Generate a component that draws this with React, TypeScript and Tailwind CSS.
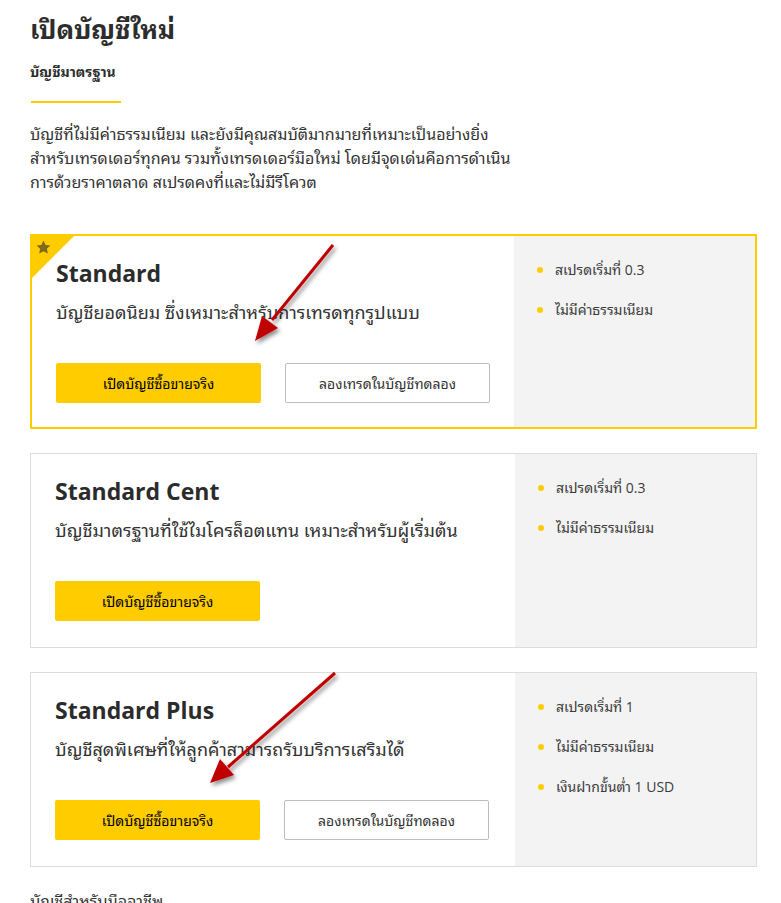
const FONT =
  "font-['Open_Sans','Noto_Sans_Thai_Looped','Loma','Garuda','Tlwg_Typo','Noto_Sans_Thai',sans-serif]";

type Plan = {
  name: string;
  desc: string;
  features: string[];
  demo: boolean;
  featured?: boolean;
};

const PLANS: Plan[] = [
  {
    name: 'Standard',
    desc: 'บัญชียอดนิยม ซึ่งเหมาะสำหรับการเทรดทุกรูปแบบ',
    features: ['สเปรดเริ่มที่ 0.3', 'ไม่มีค่าธรรมเนียม'],
    demo: true,
    featured: true,
  },
  {
    name: 'Standard Cent',
    desc: 'บัญชีมาตรฐานที่ใช้ไมโครล็อตแทน เหมาะสำหรับผู้เริ่มต้น',
    features: ['สเปรดเริ่มที่ 0.3', 'ไม่มีค่าธรรมเนียม'],
    demo: false,
  },
  {
    name: 'Standard Plus',
    desc: 'บัญชีสุดพิเศษที่ให้ลูกค้าสามารถรับบริการเสริมได้',
    features: ['สเปรดเริ่มที่ 1', 'ไม่มีค่าธรรมเนียม', 'เงินฝากขั้นต่ำ 1 USD'],
    demo: true,
  },
];

function Corner() {
  return (
    <div className="absolute left-0 top-0 h-[42px] w-[42px]">
      <svg width="42" height="42" viewBox="0 0 42 42">
        <polygon points="0,0 42,0 0,42" fill="#ffcc00" />
        <path
          d="M11.5 4.5l2.1 4.4 4.8.6-3.5 3.3.9 4.8-4.3-2.3-4.3 2.3.9-4.8-3.5-3.3 4.8-.6z"
          fill="#7d6a1c"
        />
      </svg>
    </div>
  );
}

function PlanCard({ plan }: { plan: Plan }) {
  return (
    <div
      className={
        plan.featured
          ? 'relative flex h-[195px] border-2 border-[#ffcc00] bg-white'
          : 'relative flex h-[195px] border border-[#dcdcdc] bg-white'
      }
    >
      {plan.featured && <Corner />}
      <div className="flex-1 pl-[24px] pt-[22px]">
        <h3 className="text-[23px] font-bold leading-[30px] text-[#2b2b2b]">{plan.name}</h3>
        <p className="mt-[10px] text-[18px] leading-[28px] text-[#333]">{plan.desc}</p>
        <div className="mt-[37px] flex gap-[24px]">
          <button className="h-[40px] w-[205px] rounded-[2px] bg-[#ffcc00] text-[14px] text-black">
            เปิดบัญชีซื้อขายจริง
          </button>
          {plan.demo && (
            <button className="h-[40px] w-[205px] rounded-[2px] border border-[#bdbdbd] bg-white text-[14px] text-[#333]">
              ลองเทรดในบัญชีทดลอง
            </button>
          )}
        </div>
      </div>
      <ul className="flex w-[241px] flex-col gap-[20px] bg-[#f3f3f3] pl-[23px] pt-[24px]">
        {plan.features.map((f) => (
          <li key={f} className="flex items-center gap-[12px] text-[14px] leading-[20px] text-[#3c3c3c]">
            <span className="h-[6px] w-[6px] rounded-full bg-[#ffcc00]" />
            {f}
          </li>
        ))}
      </ul>
    </div>
  );
}

function Arrows() {
  return (
    <svg className="pointer-events-none absolute left-0 top-0" width="781" height="903">
      <defs>
        <filter id="sh" x="-20%" y="-20%" width="140%" height="140%">
          <feDropShadow dx="2" dy="3" stdDeviation="2" floodColor="#000" floodOpacity="0.45" />
        </filter>
      </defs>
      <g filter="url(#sh)">
        <line x1="333" y1="245" x2="272" y2="320" stroke="#c00000" strokeWidth="3" />
        <polygon points="255,341 262,316 278,328" fill="#c00000" />
        <line x1="335" y1="673" x2="228" y2="767" stroke="#c00000" strokeWidth="3" />
        <polygon points="210,783 220,759 234,775" fill="#c00000" />
      </g>
    </svg>
  );
}

export default function App() {
  return (
    <div className={`relative h-[903px] w-[781px] overflow-hidden bg-white ${FONT}`}>
      <div className="ml-[30px] w-[727px]">
        <h1 className="pt-[13px] text-[26px] font-bold leading-[32px] text-[#2d2d2d]">เปิดบัญชีใหม่</h1>
        <h2 className="mt-[17px] text-[14px] font-bold leading-[20px] text-[#2d2d2d]">บัญชีมาตรฐาน</h2>
        <div className="ml-px mt-[19px] h-[2px] w-[90px] bg-[#ffcc00]" />
        <p className="mt-[19px] w-[520px] text-[16px] leading-[24px] text-[#333]">
          บัญชีที่ไม่มีค่าธรรมเนียม และยังมีคุณสมบัติมากมายที่เหมาะเป็นอย่างยิ่ง
          <br />
          สำหรับเทรดเดอร์ทุกคน รวมทั้งเทรดเดอร์มือใหม่ โดยมีจุดเด่นคือการดำเนิน
          <br />
          การด้วยราคาตลาด สเปรดคงที่และไม่มีรีโควต
        </p>
        <div className="mt-[40px] flex flex-col gap-[24px]">
          {PLANS.map((p) => (
            <PlanCard key={p.name} plan={p} />
          ))}
        </div>
        <p className="mt-[22px] text-[16px] leading-[24px] text-[#333]">บัญชีสำหรับมืออาชีพ</p>
      </div>
      <Arrows />
    </div>
  );
}
